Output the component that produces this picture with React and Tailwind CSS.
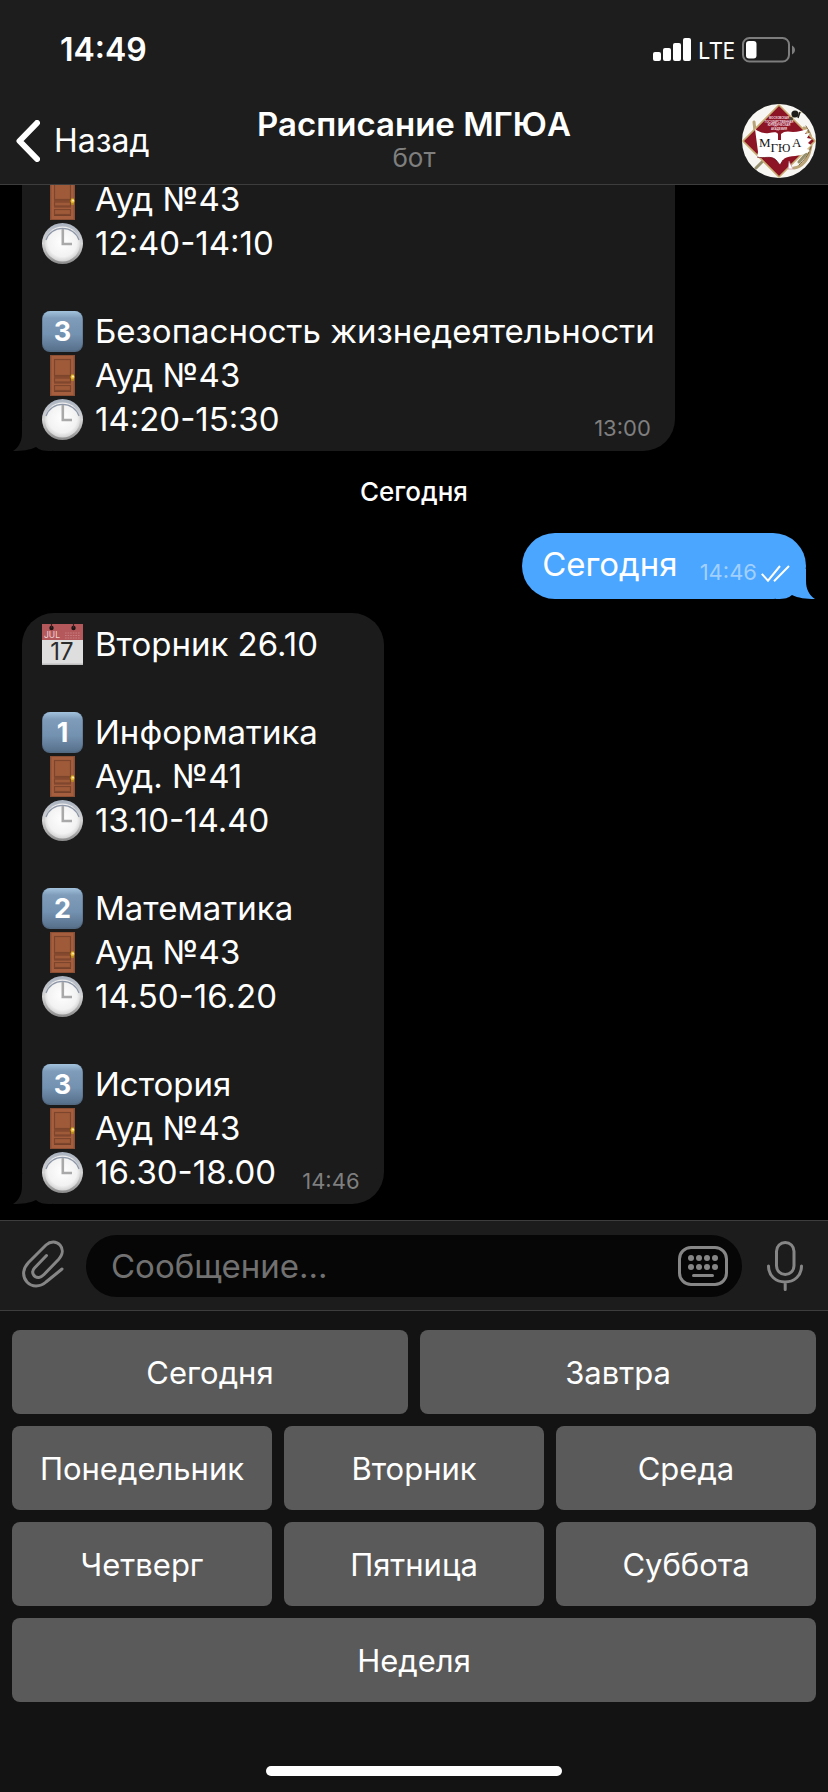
import React from "react";

function SignalIcon() {
  return (
    <svg className="h-6 w-[38px]" viewBox="0 0 38 24" fill="white" aria-hidden="true">
      <rect x="0" y="14" width="8" height="9" rx="2" />
      <rect x="10" y="10" width="8" height="13" rx="2" />
      <rect x="20" y="5" width="8" height="18" rx="2" />
      <rect x="30" y="0" width="8" height="23" rx="2" />
    </svg>
  );
}

function BatteryIcon() {
  return (
    <svg className="h-[26px] w-[54px]" viewBox="0 0 54 26" aria-hidden="true">
      <rect x="1" y="1" width="46" height="23.5" rx="6.5" fill="none" stroke="#7d7d7d" strokeWidth="2" />
      <rect x="4" y="4" width="10.5" height="17.5" rx="3" fill="white" />
      <path d="M50 8.5C54 10.5 54 15.5 50 17.5Z" fill="#7d7d7d" />
    </svg>
  );
}

function Avatar() {
  return (
    <svg className="size-[74px]" viewBox="0 0 74 74" role="img" aria-label="МГЮА">
      <defs>
        <clipPath id="avatar-clip">
          <circle cx="37" cy="37" r="37" />
        </clipPath>
      </defs>
      <g clipPath="url(#avatar-clip)">
        <rect width="74" height="74" fill="#f7f6f2" />
        <g fill="none" strokeLinecap="round">
          <path d="M12 18L13 27M62 24C68 26 71 36 68 46C66 56 60 63 52 64" stroke="#b9a377" strokeWidth="3" />
          <path d="M64 22C70 30 66 38 69 43C66 52 62 56 57 61" stroke="#7d6238" strokeWidth="1" />
          <path d="M14 64L22 56M57 58L64 50" stroke="#96906f" strokeWidth="3" />
          <path d="M50 14L62 6" stroke="#d6cdb0" strokeWidth="2" />
        </g>
        <path d="M37 1L73 37L37 73L1 37Z" fill="#8c1424" stroke="#c9ae74" strokeWidth="1.6" />
        <circle cx="53" cy="10" r="3.6" fill="#1c1c1a" />
        <circle cx="49" cy="15" r="2" fill="#4a463c" />
        <path d="M58 8L56 14" stroke="#1c1c1a" strokeWidth="1.4" />
        <path
          d="M13 25C17 28 22 30 27 29C32 28 35 28 36 30V36H39V30C42 27 46 27 51 28C56 28 61 26 66 25L63 30L68 29L65 34L70 35L66 39L69 41L65 45L68 47L62 50C55 53 44 51 41 56L38 61L34 56C29 51 22 55 15 53L16 48Z"
          fill="white"
        />
        <path d="M15 53C22 55 29 51 34 56L38 61L41 56" fill="none" stroke="#6d1420" strokeWidth="0.8" />
        <path d="M46 65L47 57L51 65Z" fill="white" stroke="#b78" strokeWidth="0.6" />
        <g fill="#f3dfe0" fontFamily="Liberation Sans, sans-serif" fontWeight="700" fontSize="2.8" textAnchor="middle">
          <text x="37" y="15">МОСКОВСКАЯ</text>
          <text x="37" y="18.6">ГОСУДАРСТВЕННАЯ</text>
          <text x="37" y="22.2">ЮРИДИЧЕСКАЯ</text>
          <text x="37" y="25.8">АКАДЕМИЯ</text>
        </g>
        <g fill="#151515" fontFamily="Liberation Serif, serif" fontSize="13">
          <text x="17" y="43">М</text>
          <text x="28.5" y="48">Г</text>
          <text x="36" y="48" fontSize="12">Ю</text>
          <text x="50" y="43">А</text>
        </g>
      </g>
    </svg>
  );
}

function KeycapIcon({ digit }) {
  return (
    <svg className="size-[41px] shrink-0" viewBox="0 0 41 41" aria-hidden="true">
      <defs>
        <linearGradient id="keycap" x1="0" y1="0" x2="0" y2="1">
          <stop offset="0" stopColor="#a3c2dc" />
          <stop offset="0.18" stopColor="#7f9dba" />
          <stop offset="0.6" stopColor="#7391b0" />
          <stop offset="1" stopColor="#58718c" />
        </linearGradient>
      </defs>
      <rect width="41" height="41" rx="8" fill="#536a82" />
      <rect x="0.5" width="40" height="39.5" rx="8" fill="url(#keycap)" />
      <text x="20.5" y="30" textAnchor="middle" fontFamily="Inter, sans-serif" fontWeight="700" fontSize="27" fill="white">
        {digit}
      </text>
    </svg>
  );
}

function DoorIcon() {
  return (
    <svg className="size-[41px] shrink-0" viewBox="0 0 41 41" aria-hidden="true">
      <rect x="8" width="25" height="41" fill="#8d4f33" />
      <rect x="9.5" y="1" width="22" height="39" fill="#a65f3e" />
      <g fill="#9f5a3a" stroke="#7d452c" strokeWidth="1.2">
        <rect x="12.5" y="4.5" width="16" height="16" />
        <rect x="12.5" y="23" width="16" height="4" />
        <rect x="12.5" y="30.5" width="16" height="5" />
      </g>
      <path d="M12 21.8H29M12 28H29M12 36.5H29" stroke="#75402a" strokeWidth="1" />
      <rect x="29" y="19" width="3" height="7" rx="1" fill="#b98a1e" />
      <circle cx="30.5" cy="22" r="2" fill="#e9bd35" />
      <circle cx="31" cy="21.5" r="0.9" fill="#fff2b0" />
    </svg>
  );
}

function ClockIcon() {
  return (
    <svg className="size-[41px] shrink-0" viewBox="0 0 41 41" aria-hidden="true">
      <defs>
        <linearGradient id="clock-rim" x1="0" y1="0" x2="0" y2="1">
          <stop offset="0" stopColor="#a9b2c0" />
          <stop offset="0.5" stopColor="#d6d6d6" />
          <stop offset="1" stopColor="#8b8b8b" />
        </linearGradient>
        <radialGradient id="clock-face" cx="0.5" cy="0.45" r="0.55">
          <stop offset="0" stopColor="#ffffff" />
          <stop offset="0.75" stopColor="#f2f2f2" />
          <stop offset="1" stopColor="#d2d2d2" />
        </radialGradient>
      </defs>
      <circle cx="20.5" cy="20.5" r="20.5" fill="url(#clock-rim)" />
      <circle cx="20.5" cy="21" r="17.5" fill="url(#clock-face)" />
      <path d="M4 17A17.5 17.5 0 0 1 37 17" fill="none" stroke="#8d97a8" strokeWidth="1.2" />
      <path d="M20.8 6V21H30" fill="none" stroke="#a9a9a9" strokeWidth="2.6" />
    </svg>
  );
}

function CalendarIcon() {
  return (
    <svg className="size-[41px] shrink-0" viewBox="0 0 41 41" aria-hidden="true">
      <rect width="41" height="41" fill="#dedede" />
      <rect width="41" height="16" fill="#b5585b" />
      <rect y="39.5" width="41" height="1.5" fill="#bdbdbd" />
      <circle cx="9.5" cy="4" r="2.2" fill="#1d1414" />
      <circle cx="31.5" cy="4" r="2.2" fill="#1d1414" />
      <path d="M9.5 4V0M31.5 4V0" stroke="#3a2325" strokeWidth="1.2" />
      <path d="M23 9H38M23 11.5H38M23 14H38" stroke="#c57d80" strokeWidth="1" strokeDasharray="1.6 1" />
      <text x="2" y="14" fontFamily="Inter, sans-serif" fontSize="8.5" fill="#f0d4d5">JUL</text>
      <text x="20" y="36" textAnchor="middle" fontFamily="Inter, sans-serif" fontSize="24" fill="#2c2c2c">
        17
      </text>
    </svg>
  );
}

function LineIcon({ name }) {
  if (name === "door") return <DoorIcon />;
  if (name === "clock") return <ClockIcon />;
  if (name === "calendar") return <CalendarIcon />;
  return <KeycapIcon digit={name} />;
}

function IncomingMessage({ lines, time, continued }) {
  return (
    <article
      className={
        "relative ml-[22px] shrink-0 self-start rounded-b-[32px] bg-[#1b1b1b] pt-[9px] pr-5 pb-[10px] pl-5 " +
        (continued ? "" : "rounded-t-[32px]")
      }
    >
      <svg className="absolute bottom-0 -left-[10px] h-[30px] w-10" viewBox="0 0 40 30" fill="#1b1b1b" aria-hidden="true">
        <path d="M10 0V12C10 20 7 26 1 30C10 30 18 29 24 26C28 29 30 30 40 30V0Z" />
      </svg>
      {lines.map((line, i) => (
        <div key={i} className="relative flex h-11 items-center gap-3 whitespace-nowrap">
          {line && (
            <>
              <LineIcon name={line[0]} />
              <p>{line[1]}</p>
            </>
          )}
          {i === lines.length - 1 && (
            <time className="mr-1 ml-auto self-end pl-[14px] text-[22px] leading-[26px] text-[#7f7f7f]">{time}</time>
          )}
        </div>
      ))}
    </article>
  );
}

function OutgoingMessage() {
  return (
    <article className="relative mr-[22px] flex h-[66px] shrink-0 items-center self-end rounded-[33px] bg-[#4ba6ff] pr-4 pl-5">
      <svg className="absolute -right-[10px] bottom-0 h-[30px] w-10" viewBox="0 0 40 30" fill="#4ba6ff" aria-hidden="true">
        <path d="M30 0V12C30 20 33 26 39 30C30 30 22 29 16 26C12 29 10 30 0 30V0Z" />
      </svg>
      <p className="relative pb-1">Сегодня</p>
      <time className="relative mt-3 ml-[22px] text-[22px] leading-[26px] text-[#a1d0ff]">14:46</time>
      <svg className="relative mt-4 ml-1 h-[18px] w-[29px]" viewBox="0 0 29 18" fill="none" stroke="white" strokeWidth="2" aria-hidden="true">
        <path d="M0.8 8.8L7 15.6L19 1M13 16.3L28 1" />
      </svg>
    </article>
  );
}

const YESTERDAY = [
  ["door", "Ауд №43"],
  ["clock", "12:40-14:10"],
  null,
  ["3", "Безопасность жизнедеятельности"],
  ["door", "Ауд №43"],
  ["clock", "14:20-15:30"],
];

const TODAY = [
  ["calendar", "Вторник 26.10"],
  null,
  ["1", "Информатика"],
  ["door", "Ауд. №41"],
  ["clock", "13.10-14.40"],
  null,
  ["2", "Математика"],
  ["door", "Ауд №43"],
  ["clock", "14.50-16.20"],
  null,
  ["3", "История"],
  ["door", "Ауд №43"],
  ["clock", "16.30-18.00"],
];

const KEYBOARD = [
  ["Сегодня", "Завтра"],
  ["Понедельник", "Вторник", "Среда"],
  ["Четверг", "Пятница", "Суббота"],
  ["Неделя"],
];

function PaperclipIcon() {
  return (
    <svg className="h-12 w-[42px]" viewBox="0 0 42 48" fill="none" stroke="#868686" strokeWidth="3" strokeLinecap="round" aria-hidden="true">
      <path d="M24.5 15.5L12.5 28C8.5 32.2 12 38 17 37.5C19 37.3 20.5 36 22 34.5L36.5 19.5C41.5 14 41 8.5 38 5C34.5 1.2 28.5 1 24 5L6.500 22.500C0 29.500 0.500 37 5 42C10 47.300 18 47.300 24 42L40 29" />
    </svg>
  );
}

function KeyboardIcon() {
  return (
    <svg className="h-10 w-[50px]" viewBox="0 0 50 40" aria-hidden="true">
      <rect x="1.5" y="1.5" width="47" height="37" rx="11.5" fill="none" stroke="#868686" strokeWidth="3" />
      <g fill="#868686">
        {[13, 21, 29, 37].map((x) => (
          <React.Fragment key={x}>
            <circle cx={x} cy="12" r="3" />
            <circle cx={x} cy="21" r="3" />
          </React.Fragment>
        ))}
      </g>
      <path d="M15.5 29.5H34.5" stroke="#868686" strokeWidth="3" strokeLinecap="round" />
    </svg>
  );
}

function MicIcon() {
  return (
    <svg className="h-[50px] w-9" viewBox="0 0 36 50" fill="none" stroke="#868686" strokeWidth="3" strokeLinecap="round" aria-hidden="true">
      <rect x="9.5" y="1.5" width="17.5" height="32" rx="8.75" />
      <path d="M1.500 25C1.500 35 9 41 18 41S34.500 35 34.500 25M18.200 41V48.500" />
    </svg>
  );
}

export default function App() {
  return (
    <div className="flex h-screen flex-col overflow-hidden bg-black font-['Inter','Liberation_Sans',sans-serif] text-[33px] leading-[44px] text-white">
      <header className="shrink-0 border-b border-[#3d3d3d] bg-[#1d1d1d]">
        <div className="flex h-[98px] items-center justify-between pt-[2px] pr-8 pl-[60px]">
          <time className="text-[32px] font-semibold">14:49</time>
          <div className="flex items-center gap-[7px]">
            <SignalIcon />
            <span className="font-['Noto_Sans',sans-serif] text-[23px]">LTE</span>
            <BatteryIcon />
          </div>
        </div>
        <div className="grid h-[86px] grid-cols-[1fr_auto_1fr] items-center">
          <a href="#chats" className="flex items-center gap-[14px] pl-4 text-[32px]">
            <svg className="h-[42px] w-6" viewBox="0 0 24 42" fill="none" stroke="white" strokeWidth="6" strokeLinecap="round" strokeLinejoin="round" aria-hidden="true">
              <path d="M21 3L3.5 21L21 39" />
            </svg>
            Назад
          </a>
          <div className="pb-[2px] text-center">
            <h1 className="text-[33px] leading-9 font-semibold">Расписание МГЮА</h1>
            <p className="text-[26px] leading-8 text-[#7f7f7f]">бот</p>
          </div>
          <button type="button" aria-label="МГЮА" className="mr-3 justify-self-end">
            <Avatar />
          </button>
        </div>
      </header>

      <main className="flex min-h-0 flex-1 flex-col justify-end overflow-hidden pb-4">
        <IncomingMessage lines={YESTERDAY} time="13:00" continued />
        <h2 className="flex h-[82px] shrink-0 items-center justify-center text-[26px] font-medium">Сегодня</h2>
        <OutgoingMessage />
        <div className="h-[14px] shrink-0" />
        <IncomingMessage lines={TODAY} time="14:46" />
      </main>

      <form className="flex h-[91px] shrink-0 items-center border-y border-[#3d3d3d] bg-[#1c1c1c]" onSubmit={(e) => e.preventDefault()}>
        <button type="button" aria-label="Прикрепить" className="flex w-[86px] justify-center pb-1">
          <PaperclipIcon />
        </button>
        <div className="flex h-[62px] min-w-0 flex-1 items-center rounded-full bg-[#060606] pr-[14px] pl-[25px]">
          <input
            type="text"
            aria-label="Сообщение"
            placeholder="Сообщение..."
            className="min-w-0 flex-1 bg-transparent outline-none placeholder:text-[#717171]"
          />
          <button type="button" aria-label="Клавиатура">
            <KeyboardIcon />
          </button>
        </div>
        <button type="button" aria-label="Голосовое сообщение" className="flex w-[86px] justify-center">
          <MicIcon />
        </button>
      </form>

      <footer className="flex shrink-0 flex-col gap-3 bg-[#131313] px-3 pt-[19px] pb-4">
        {KEYBOARD.map((row) => (
          <div key={row[0]} className="flex gap-3">
            {row.map((label) => (
              <button key={label} type="button" className="h-21 flex-1 basis-0 rounded-lg bg-[#5a5a5a] pt-[2px] text-[31px]">
                {label}
              </button>
            ))}
          </div>
        ))}
        <div className="mt-[52px] h-[10px] w-[296px] self-center rounded-full bg-white" />
      </footer>
    </div>
  );
}
